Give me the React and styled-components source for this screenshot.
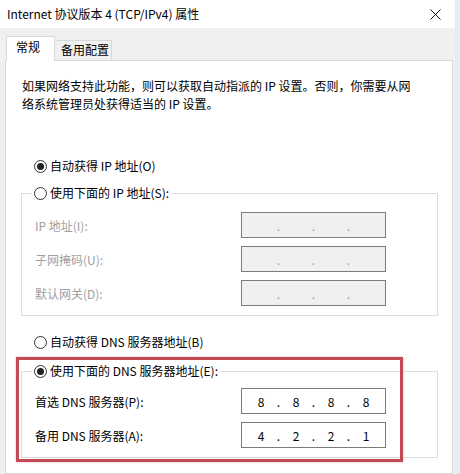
import React from "react";
import styled, { createGlobalStyle } from "styled-components";

const Global = createGlobalStyle`
  html, body { margin: 0; padding: 0; }
  body {
    font-family: "Noto Sans CJK SC", "Noto Sans", sans-serif;
    font-size: 12px;
    color: #000;
  }
`;

const Screen = styled.div`
  position: relative;
  width: 460px;
  height: 474px;
  overflow: hidden;
  display: flex;
  background: #e1edf9;
`;

const Window = styled.div`
  width: 455px;
  display: flex;
  flex-direction: column;
  background: #f0f0f0;
`;

const TitleBar = styled.div`
  height: 28px;
  flex: none;
  background: #fff;
  display: flex;
  align-items: center;
  justify-content: space-between;
  padding: 0 14px 0 7px;
`;

const Title = styled.span`
  font-size: 12px;
  line-height: 16px;
  color: #000;
`;

const TabStrip = styled.div`
  height: 32px;
  flex: none;
  display: flex;
  align-items: flex-end;
  padding-left: 6px;
`;

const Tab = styled.div`
  box-sizing: border-box;
  position: relative;
  z-index: 1;
  font-size: 12px;
  line-height: 18px;
  border: 1px solid #d9d9d9;
  ${(p) =>
    p.$active
      ? `
    width: 49px;
    height: 25px;
    margin-bottom: -1px;
    background: #fff;
    border-bottom: none;
    padding: 1px 0 0 9px;
  `
      : `
    width: 57px;
    height: 20px;
    background: #f0f0f0;
    border-left: none;
    border-bottom: none;
    padding: 0 0 0 6px;
  `}
`;

const Panel = styled.div`
  flex: 1;
  margin: 0 2px 0 5px;
  background: #fff;
  border: 1px solid #d9d9d9;
  padding: 16px 0 0 15px;
  display: flex;
  flex-direction: column;
  align-items: flex-start;
`;

const Description = styled.p`
  margin: 0 0 0 1px;
  font-size: 12px;
  line-height: 18px;
  white-space: nowrap;
`;

const RadioRow = styled.div`
  height: 20px;
  display: flex;
  align-items: center;
  gap: 3px;
  font-size: 12px;
  line-height: 20px;
  white-space: nowrap;
  padding-left: ${(p) => p.$indent || 0}px;
  margin-top: ${(p) => p.$top || 0}px;
`;

const RadioCircle = styled.span`
  box-sizing: border-box;
  width: 13px;
  height: 13px;
  border: 1px solid #333;
  border-radius: 50%;
  display: flex;
  align-items: center;
  justify-content: center;
  background: #fff;
  &::after {
    content: "";
    width: 7px;
    height: 7px;
    border-radius: 50%;
    background: ${(p) => (p.$checked ? "#222" : "transparent")};
  }
`;

const Group = styled.fieldset`
  box-sizing: border-box;
  width: 417px;
  margin: ${(p) => p.$top || 0}px 0 0 0;
  padding: 0 0 9px 13px;
  border: 1px solid #dcdcdc;
  min-width: 0;
`;

const Legend = styled.legend`
  padding: 0 2px;
  margin-left: -3px;
  background: #fff;
`;

const Rows = styled.div`
  display: flex;
  flex-direction: column;
  gap: 8px;
  padding-top: ${(p) => p.$top || 0}px;
`;

const FieldRow = styled.div`
  height: 26px;
  display: flex;
  align-items: center;
`;

const FieldLabel = styled.span`
  width: 206px;
  font-size: 12px;
  white-space: nowrap;
  color: ${(p) => (p.$disabled ? "#a0a0a0" : "#000")};
`;

const IpBox = styled.div`
  box-sizing: border-box;
  width: 145px;
  height: 26px;
  border: 1px solid ${(p) => (p.$disabled ? "#7c7c7c" : "#7a7a7a")};
  background: ${(p) => (p.$disabled ? "#f0f0f0" : "#fff")};
  display: flex;
  align-items: center;
  padding-left: 5px;
  font-size: 12px;
  color: ${(p) => (p.$disabled ? "#a0a0a0" : "#000")};
`;

const Octet = styled.span`
  width: 28px;
  text-align: center;
`;

const Dot = styled.span`
  width: 7px;
  text-align: center;
`;

const Highlight = styled.div`
  position: absolute;
  left: 16px;
  top: 357px;
  width: 387px;
  height: 105px;
  box-sizing: border-box;
  border: 3px solid #c24a54;
  box-shadow: 0 0 2px rgba(200, 80, 90, 0.45);
  pointer-events: none;
`;

function CloseIcon() {
  return (
    <svg width="11" height="11" viewBox="0 0 11 11">
      <path d="M0.5 0.5 L10.5 10.5 M10.5 0.5 L0.5 10.5" stroke="#111" strokeWidth="1" fill="none" />
    </svg>
  );
}

function Radio({ checked, children, indent, top }) {
  return (
    <RadioRow $indent={indent} $top={top}>
      <RadioCircle $checked={checked} />
      <span>{children}</span>
    </RadioRow>
  );
}

function IpField({ values, disabled }) {
  const v = values || ["", "", "", ""];
  return (
    <IpBox $disabled={disabled}>
      {v.map((o, i) => (
        <React.Fragment key={i}>
          <Octet>{o}</Octet>
          {i < 3 && <Dot>.</Dot>}
        </React.Fragment>
      ))}
    </IpBox>
  );
}

function Field({ label, values, disabled }) {
  return (
    <FieldRow>
      <FieldLabel $disabled={disabled}>{label}</FieldLabel>
      <IpField values={values} disabled={disabled} />
    </FieldRow>
  );
}

export default function App() {
  return (
    <>
      <Global />
      <Screen>
        <Window>
          <TitleBar>
            <Title>Internet 协议版本 4 (TCP/IPv4) 属性</Title>
            <CloseIcon />
          </TitleBar>
          <TabStrip>
            <Tab $active>常规</Tab>
            <Tab>备用配置</Tab>
          </TabStrip>
          <Panel>
            <Description>
              如果网络支持此功能，则可以获取自动指派的 IP 设置。否则，你需要从网
              <br />
              络系统管理员处获得适当的 IP 设置。
            </Description>
            <Radio checked indent={13} top={43}>
              自动获得 IP 地址(O)
            </Radio>
            <Group $top={7}>
              <Legend>
                <Radio>使用下面的 IP 地址(S):</Radio>
              </Legend>
              <Rows $top={9}>
                <Field label="IP 地址(I):" disabled />
                <Field label="子网掩码(U):" disabled />
                <Field label="默认网关(D):" disabled />
              </Rows>
            </Group>
            <Radio indent={13} top={16}>
              自动获得 DNS 服务器地址(B)
            </Radio>
            <Group $top={9}>
              <Legend>
                <Radio checked>使用下面的 DNS 服务器地址(E):</Radio>
              </Legend>
              <Rows $top={7}>
                <Field label="首选 DNS 服务器(P):" values={["8", "8", "8", "8"]} />
                <Field label="备用 DNS 服务器(A):" values={["4", "2", "2", "1"]} />
              </Rows>
            </Group>
          </Panel>
        </Window>
        <Highlight />
      </Screen>
    </>
  );
}
